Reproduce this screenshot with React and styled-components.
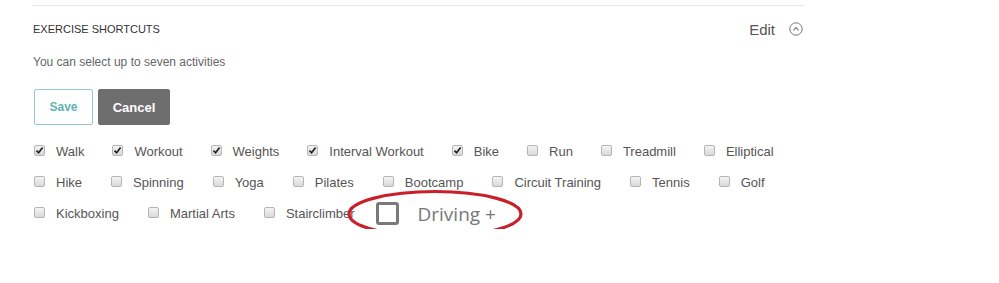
import React from 'react';
import styled, { createGlobalStyle } from 'styled-components';

// activity rows as they appear on the page
const rows = [
  { gap: 28, items: [
    { label: 'Walk', checked: true },
    { label: 'Workout', checked: true },
    { label: 'Weights', checked: true },
    { label: 'Interval Workout', checked: true },
    { label: 'Bike', checked: true },
    { label: 'Run' },
    { label: 'Treadmill' },
    { label: 'Elliptical' },
  ] },
  { gap: 29, items: [
    { label: 'Hike' },
    { label: 'Spinning' },
    { label: 'Yoga' },
    { label: 'Pilates' },
    { label: 'Bootcamp' },
    { label: 'Circuit Training' },
    { label: 'Tennis' },
    { label: 'Golf' },
  ] },
  { gap: 29, items: [
    { label: 'Kickboxing' },
    { label: 'Martial Arts' },
    { label: 'Stairclimber' },
  ] },
];

const GlobalStyle = createGlobalStyle`
  body {
    margin: 0;
    background: #fff;
    font-family: "Liberation Sans", Arial, sans-serif;
  }
`;

const Page = styled.div`
  padding: 5px 0 0 33px;
`;

const Section = styled.section`
  width: 772px;
  border-top: 1px solid #e6e6e6;
`;

const Header = styled.div`
  height: 46px;
  display: flex;
  align-items: center;
  justify-content: space-between;
`;

const Title = styled.h2`
  margin: 0;
  font-size: 11px;
  font-weight: normal;
  text-transform: uppercase;
  color: #333;
`;

const EditLink = styled.div`
  display: flex;
  align-items: center;
  gap: 14px;
  font-size: 15px;
  color: #555;
  padding-right: 2px;
`;

const Hint = styled.p`
  margin: 2px 0 0;
  font-size: 12px;
  line-height: 16px;
  color: #666;
`;

const Buttons = styled.div`
  display: flex;
  gap: 5px;
  margin-top: 19px;
  padding-left: 1px;
`;

const Button = styled.button`
  height: 36px;
  width: ${(p) => (p.primary ? 72 : 59)}px;
  border-radius: 2px;
  font-family: "Liberation Sans", Arial, sans-serif;
  font-weight: bold;
  font-size: ${(p) => (p.primary ? 13 : 12)}px;
  border: 1px solid ${(p) => (p.primary ? '#6e6e6e' : '#94c9c9')};
  background: ${(p) => (p.primary ? '#6e6e6e' : '#fff')};
  color: ${(p) => (p.primary ? '#fff' : '#5fb3b3')};
`;

const Options = styled.div`
  margin-top: 11px;
  padding-left: 1px;
`;

const Row = styled.div`
  height: 31px;
  display: flex;
  align-items: center;
  gap: ${(p) => p.gap}px;
`;

const Option = styled.label`
  display: flex;
  align-items: center;
  gap: 11px;
  font-size: 13px;
  color: #555;
`;

const Box = styled.span`
  width: 11px;
  height: 11px;
  box-sizing: border-box;
  border: 1px solid #b5b5b5;
  border-radius: 2px;
  background: linear-gradient(#f4f4f4, #d9d9d9);
  display: flex;
  align-items: center;
  justify-content: center;
  position: relative;
  top: -1px;
`;

const DrivingOption = styled.label`
  position: relative;
  display: flex;
  align-items: center;
  gap: 19px;
  margin-left: -8px;
  font-family: "Open Sans", sans-serif;
  font-size: 19px;
  line-height: 26px;
  color: #777;
`;

const BigBox = styled.span`
  width: 23px;
  height: 23px;
  box-sizing: border-box;
  border: 3px solid #7a7a7a;
  border-radius: 3px;
  background: #fff;
`;

const Circle = styled.svg`
  position: absolute;
  left: -29px;
  top: -11px;
  width: 178px;
  height: 49px;
  overflow: visible;
`;

const Check = () => (
  <svg width="9" height="9" viewBox="0 0 9 9">
    <path d="M1.5 4.6 L3.6 6.8 L7.6 1.6" fill="none" stroke="#222" strokeWidth="1.7" />
  </svg>
);

const ChevronCircle = () => (
  <svg width="14" height="14" viewBox="0 0 14 14">
    <circle cx="7" cy="7" r="6.2" fill="none" stroke="#777" strokeWidth="1" />
    <path d="M4.4 8.3 L7 5.6 L9.6 8.3" fill="none" stroke="#777" strokeWidth="1.1" />
  </svg>
);

const App = () => (
  <Page>
    <GlobalStyle />
    <Section>
      <Header>
        <Title>Exercise Shortcuts</Title>
        <EditLink>
          Edit
          <ChevronCircle />
        </EditLink>
      </Header>
      <Hint>You can select up to seven activities</Hint>
      <Buttons>
        <Button>Save</Button>
        <Button primary>Cancel</Button>
      </Buttons>
      <Options>
        {rows.map((row, idx) => (
          <Row key={idx} gap={row.gap}>
            {row.items.map((it) => (
              <Option key={it.label}>
                <Box>{it.checked && <Check />}</Box>
                {it.label}
              </Option>
            ))}
            {idx === rows.length - 1 && (
              <DrivingOption>
                <BigBox />
                Driving +
                <Circle viewBox="0 0 178 49">
                  <ellipse cx="88" cy="24" rx="86" ry="22.5" fill="none" stroke="#c8202b" strokeWidth="3.2" />
                </Circle>
              </DrivingOption>
            )}
          </Row>
        ))}
      </Options>
    </Section>
  </Page>
);

export default App;
